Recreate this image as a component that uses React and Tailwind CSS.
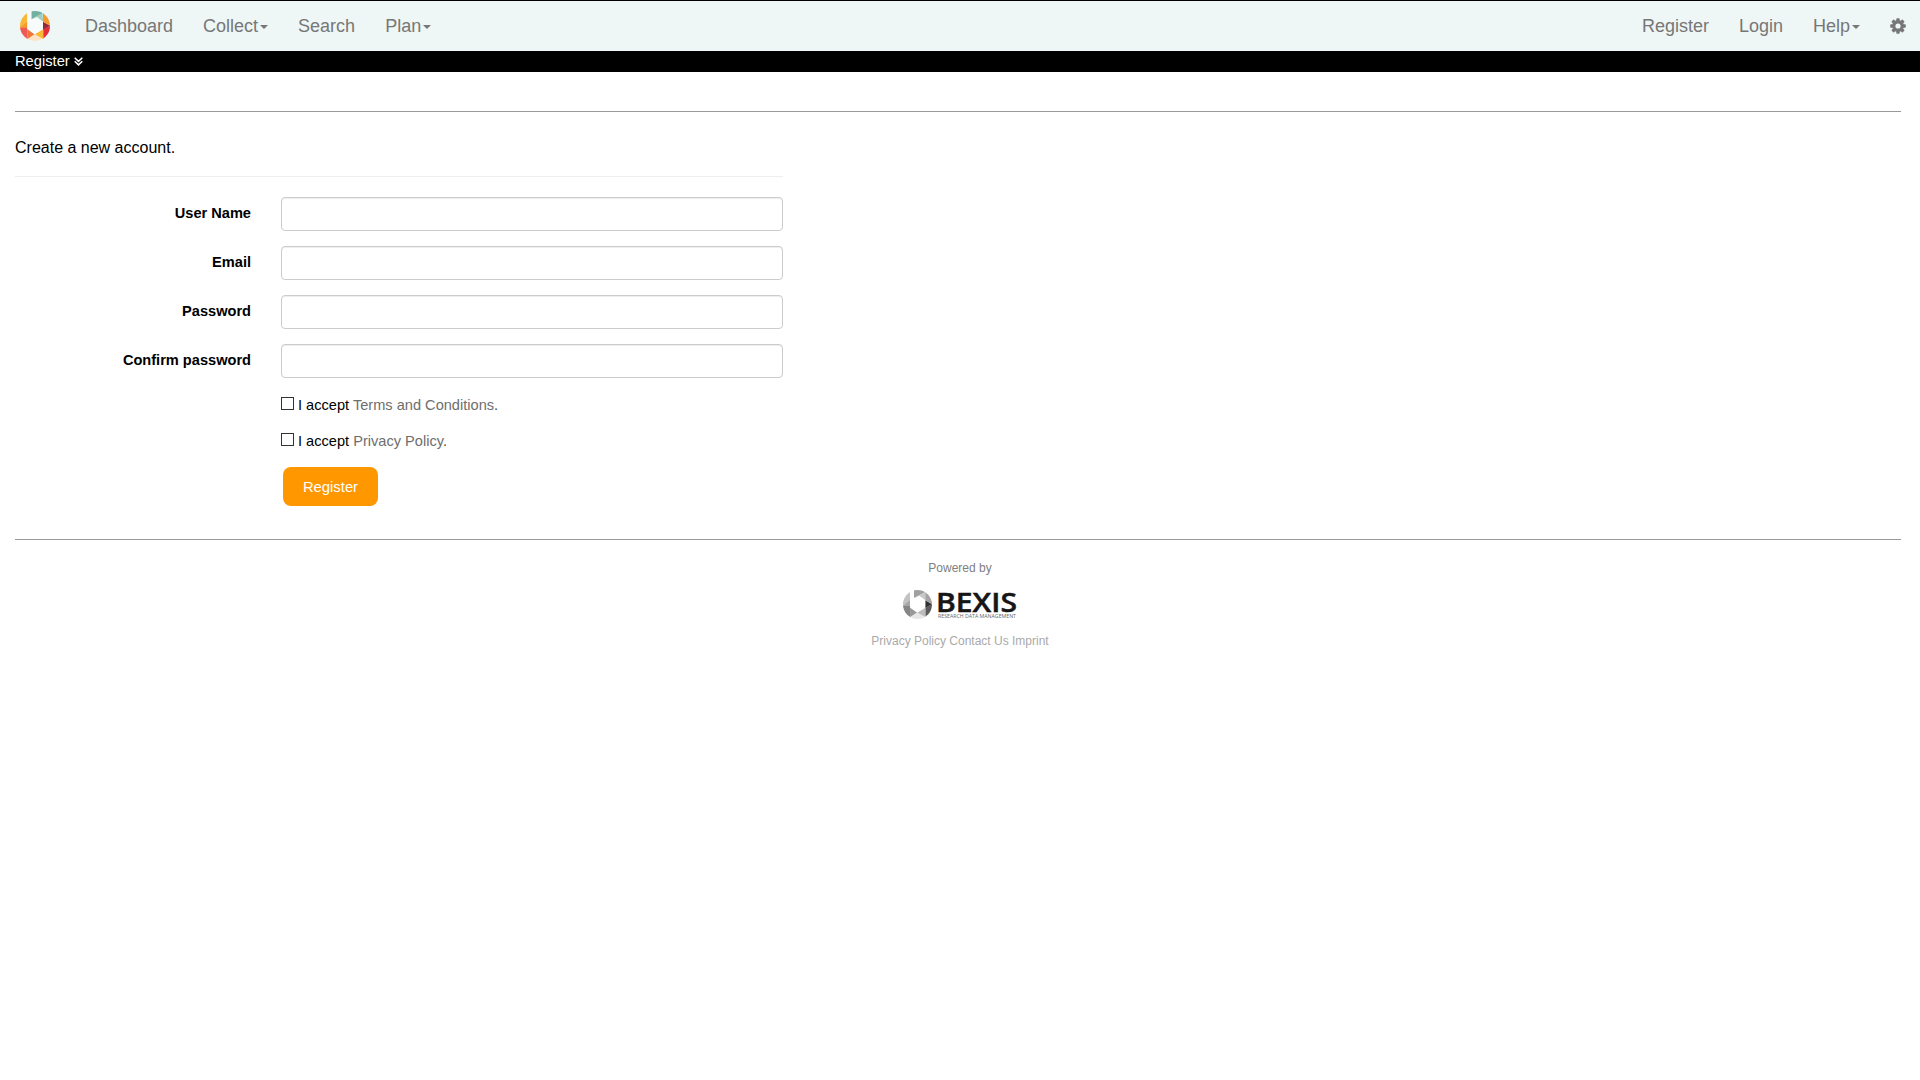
import React, { useId } from "react";

const COLOR = {
  yellow: "#f8b834", amber: "#f79a2b", coral: "#ee5a55", orange: "#f3743a", cream: "#fde3c3",
  gold: "#f9b935", red: "#e62e3a", maroon: "#93293a", tangerine: "#f79a2b", mint: "#9fd0bd", teal: "#72b1a2",
};
const GREY = {
  yellow: "#c2c2c2", amber: "#a6a6a6", coral: "#858585", orange: "#989898", cream: "#e6e6e6",
  gold: "#bcbcbc", red: "#5b5b5b", maroon: "#303030", tangerine: "#a4a4a4", mint: "#c8c8c8", teal: "#a0a0a0",
};

function Ring({ c, className }) {
  const id = useId();
  return (
    <svg viewBox="0 0 90 90" className={className}>
      <clipPath id={id}><circle cx="45" cy="45" r="45" /></clipPath>
      <g clipPath={`url(#${id})`}>
        <polygon points="0,0 22,0 22,30 0,48" fill={c.yellow} />
        <polygon points="0,48 22,30 22,52 0,52" fill={c.amber} />
        <polygon points="0,50 22,50 22,90 0,90" fill={c.coral} />
        <polygon points="22,54 44,70 22,86" fill={c.orange} />
        <polygon points="15,90 22,84 44,70 70,82 76,90" fill={c.cream} />
        <polygon points="44,70 70,54 70,84" fill={c.gold} />
        <polygon points="70,55 90,44 90,90 70,90" fill={c.red} />
        <polygon points="69,32 91,44 69,56" fill={c.maroon} />
        <polygon points="69,0 90,0 90,44 69,32" fill={c.tangerine} />
        <polygon points="34,26 68,6 69,32 51,19" fill={c.mint} />
        <polygon points="34,0 60,0 69,6 34,25" fill={c.teal} />
      </g>
      <polygon points="22,0 34,0 34,26 51,19 69,32 69,55 44,70 22,54" fill={c === GREY ? "#fff" : "#f8fbfb"} />
    </svg>
  );
}

function Gear() {
  return (
    <svg viewBox="-8 -8 16 16" className="size-4" fill="#777">
      {[0, 45, 90, 135].map((a) => (
        <rect key={a} x="-1.7" y="-7.8" width="3.4" height="15.6" rx="0.7" transform={`rotate(${a})`} />
      ))}
      <circle r="5.9" />
      <circle r="2.6" fill="#eef6f6" />
    </svg>
  );
}

function DoubleChevron() {
  return (
    <svg width="9" height="9" viewBox="0 0 9 9" className="ml-[4px]" fill="none" stroke="#fff" strokeWidth="1.5">
      <path d="M0.7 0.8 4.5 4.4 8.3 0.8M0.7 4.3 4.5 7.9 8.3 4.3" />
    </svg>
  );
}

function NavLink({ children, caret }) {
  return (
    <a className="flex items-center px-[15px]">
      {children}
      {caret && <span className="mt-[2px] ml-[2px] border-x-4 border-t-4 border-x-transparent border-t-[#777]" />}
    </a>
  );
}

function Field({ label }) {
  return (
    <div className="mb-[15px] flex h-[34px]">
      <label className="w-[236px] pt-[6px] text-right text-[14.6px] leading-[21px] font-bold">{label}</label>
      <input className="ml-[30px] h-[34px] w-[502px] rounded-[4px] border border-[#ccc] bg-white px-3 shadow-[inset_0_1px_1px_rgba(0,0,0,0.075)]" />
    </div>
  );
}

function Accept({ children }) {
  return (
    <div className="mb-[15px] flex h-[21px] text-[14.6px] leading-[21px]">
      <span className="mt-[3px] mr-[4px] size-[13px] border border-[#333] bg-white" />
      <span className="pt-px">I accept <a className="text-[#6e6e6e]">{children}</a><span className="text-[#444]">.</span></span>
    </div>
  );
}

export default function App() {
  return (
    <div className="min-h-screen bg-white font-['Liberation_Sans',Arial,sans-serif] text-black">
      <nav className="flex h-[51px] justify-between border-t border-black bg-[#eef6f6] text-[18px] leading-5 text-[#777]">
        <div className="flex">
          <a className="flex w-[70px] items-start pt-[10px] pl-5"><Ring c={COLOR} className="size-[30px]" /></a>
          <NavLink>Dashboard</NavLink>
          <NavLink caret>Collect</NavLink>
          <NavLink>Search</NavLink>
          <NavLink caret>Plan</NavLink>
        </div>
        <div className="flex">
          <NavLink>Register</NavLink>
          <NavLink>Login</NavLink>
          <NavLink caret>Help</NavLink>
          <a className="flex items-center pr-[14px] pl-[15px]"><Gear /></a>
        </div>
      </nav>
      <div className="flex h-[21px] items-center bg-black pb-[1px] pl-[15px] text-[14.7px] leading-[20px] text-white">
        Register
        <DoubleChevron />
      </div>

      <main className="ml-[15px] w-[1886px] pt-[39px]">
        <hr className="border-t border-[#999]" />
        <h4 className="mt-[24px] text-[16px] leading-6">Create a new account.</h4>
        <hr className="mt-[16px] mb-[20px] w-[768px] border-t border-[#eee]" />
        <form>
          <Field label="User Name" />
          <Field label="Email" />
          <Field label="Password" />
          <Field label="Confirm password" />
          <div className="pt-[1px] pl-[266px]">
            <Accept>Terms and Conditions</Accept>
            <Accept>Privacy Policy</Accept>
            <button type="button" className="mt-[16px] ml-[2px] block h-[39px] w-[95px] rounded-[8px] bg-[#ff9800] pt-px text-[14.8px] text-white">Register</button>
          </div>
        </form>
        <hr className="mt-[33px] border-t border-[#999]" />
      </main>

      <footer className="flex flex-col items-center pt-[19px] text-[12px] leading-[18px]">
        <span className="text-[#808080]">Powered by</span>
        <div className="mt-[13px] flex h-[30px]">
          <Ring c={GREY} className="size-[29px]" />
          <svg width="79" height="30" viewBox="0 0 79 30" className="ml-[6px] overflow-visible">
            <text x="-2" y="21.7" fontSize="27" fontWeight="600" fontFamily="Open Sans, sans-serif" textLength="81" lengthAdjust="spacingAndGlyphs" fill="#161616" stroke="#161616" strokeWidth="0.5">BEXIS</text>
            <text x="0" y="28.2" fontSize="5.3" fontFamily="Open Sans, sans-serif" textLength="78" lengthAdjust="spacingAndGlyphs" fill="#666">RESEARCH DATA MANAGEMENT</text>
          </svg>
        </div>
        <div className="mt-[12px] text-[#aaa]">Privacy Policy Contact Us Imprint</div>
      </footer>
    </div>
  );
}
